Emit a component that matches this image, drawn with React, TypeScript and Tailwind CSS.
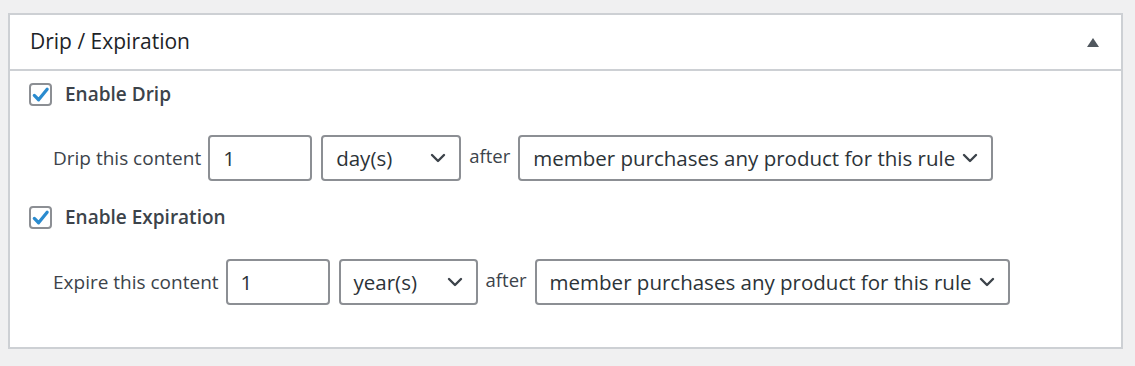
import React from 'react';

const font = { fontFamily: '"Open Sans", "Noto Sans", sans-serif' };

const Checkbox: React.FC = () => (
  <span className="flex h-[23px] w-[23px] shrink-0 items-center justify-center rounded-[4px] border-2 border-[#8c8f94] bg-white">
    <svg viewBox="0 0 20 20" className="h-[20px] w-[20px]">
      <path d="M3.5 10.5 L8 15 L17 4" fill="none" stroke="#2a8bcf" strokeWidth="3.4" strokeLinecap="round" strokeLinejoin="round" />
    </svg>
  </span>
);

const Chevron: React.FC = () => (
  <svg viewBox="0 0 16 10" className="h-[10px] w-[16px] shrink-0">
    <path d="M2 2 L8 8 L14 2" fill="none" stroke="#3c434a" strokeWidth="2.4" strokeLinecap="round" strokeLinejoin="round" />
  </svg>
);

interface SelectProps {
  value: string;
  width: string;
}

const FakeSelect: React.FC<SelectProps> = ({ value, width }) => (
  <div className={`flex h-[46px] ${width} items-center justify-between rounded-[4px] border-2 border-[#8c8f94] bg-white pl-[13px] pr-[13px] text-[20.5px] text-[#2c3338]`}>
    <span className="whitespace-nowrap">{value}</span>
    <Chevron />
  </div>
);

const NumberBox: React.FC<{ width: string }> = ({ width }) => (
  <div className={`flex h-[46px] ${width} items-center rounded-[4px] border-2 border-[#8c8f94] bg-white pl-[13px] text-[20.5px] text-[#2c3338]`}>
    1
  </div>
);

interface RuleRowProps {
  label: string;
  unit: string;
  unitWidth: string;
}

const RuleRow: React.FC<RuleRowProps> = ({ label, unit, unitWidth }) => (
  <div className="flex items-center pl-[43px]">
    <span className="mr-[7px] whitespace-nowrap text-[19px] text-[#3c434a]">{label}</span>
    <NumberBox width="w-[104px]" />
    <div className="ml-[9px]">
      <FakeSelect value={unit} width={unitWidth} />
    </div>
    <span className="mx-[8px] -mt-[5px] text-[18.5px] text-[#3c434a]">after</span>
    <FakeSelect value="member purchases any product for this rule" width="w-[475px]" />
  </div>
);

const App: React.FC = () => {
  return (
    <div className="min-h-[366px] bg-[#f0f0f1] px-[8px] pt-[13px]" style={font}>
      <div className="w-[1115px] border-2 border-[#cdd0d4] bg-white">
        {/* Header */}
        <div className="flex h-[56px] items-center justify-between border-b-2 border-[#cdd0d4] pl-[20px] pr-[22px]">
          <h2 className="text-[21px] text-[#1d2327]">Drip / Expiration</h2>
          <svg viewBox="0 0 12 9" className="h-[9px] w-[12px]">
            <path d="M6 0 L12 9 L0 9 Z" fill="#50575e" />
          </svg>
        </div>

        {/* Body */}
        <div className="pb-[42px] pt-[12px]">
          <label className="flex h-[23px] items-center gap-[13px] pl-[19px]">
            <Checkbox />
            <span className="text-[19px] font-semibold text-[#3c434a]">Enable Drip</span>
          </label>
          <div className="mt-[29px]">
            <RuleRow label="Drip this content" unit="day(s)" unitWidth="w-[140px]" />
          </div>
          <label className="mt-[25px] flex h-[23px] items-center gap-[13px] pl-[19px]">
            <Checkbox />
            <span className="text-[19px] font-semibold text-[#3c434a]">Enable Expiration</span>
          </label>
          <div className="mt-[30px]">
            <RuleRow label="Expire this content" unit="year(s)" unitWidth="w-[139px]" />
          </div>
        </div>
      </div>
    </div>
  );
};

export default App;
